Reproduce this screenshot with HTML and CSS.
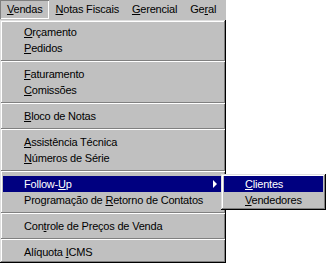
FILE: index.html
```html
<!DOCTYPE html>
<html lang="pt">
<head>
    <meta charset="UTF-8">
    <title>Vendas</title>
    <link rel="stylesheet" href="styles.css">
</head>
<body>
    <div class="menubar">
        <div class="menubar-item active"><u>V</u>endas</div>
        <div class="menubar-item"><u>N</u>otas Fiscais</div>
        <div class="menubar-item"><u>G</u>erencial</div>
        <div class="menubar-item">Ge<u>r</u>al</div>
    </div>

    <div class="dropdown">
        <div class="item"><u>O</u>rçamento</div>
        <div class="item"><u>P</u>edidos</div>
        <div class="separator"></div>
        <div class="item"><u>F</u>aturamento</div>
        <div class="item"><u>C</u>omissões</div>
        <div class="separator"></div>
        <div class="item"><u>B</u>loco de Notas</div>
        <div class="separator"></div>
        <div class="item"><u>A</u>ssistência Técnica</div>
        <div class="item"><u>N</u>úmeros de Série</div>
        <div class="separator"></div>
        <div class="item selected has-sub">
            Follow-<u>U</u>p
            <span class="arrow"></span>
            <div class="submenu">
                <div class="item selected"><u>C</u>lientes</div>
                <div class="item"><u>V</u>endedores</div>
            </div>
        </div>
        <div class="item">Programação de <u>R</u>etorno de Contatos</div>
        <div class="separator"></div>
        <div class="item">Con<u>t</u>role de Preços de Venda</div>
        <div class="separator"></div>
        <div class="item">Alíquota <u>I</u>CMS</div>
    </div>
</body>
</html>
```

FILE: styles.css
```css
body {
    margin: 0;
    background: #fff;
    font-family: "Liberation Sans", Arial, sans-serif;
    font-size: 11px;
    letter-spacing: -0.2px;
    color: #000;
}
u {
    text-decoration: underline;
    text-underline-offset: 1px;
}
.menubar {
    display: flex;
    width: 226px;
    height: 20px;
    background: #c0c0c0;
}
.menubar-item {
    flex-shrink: 0;
    white-space: nowrap;
    padding: 0 6px 0 7px;
    height: 19px;
    line-height: 19px;
}
.menubar-item.active {
    box-shadow: inset 1px 1px #808080, inset -1px -1px #fff;
}
.dropdown {
    position: relative;
    width: 220px;
    padding: 4px 3px 3px;
    background: #c0c0c0;
    box-shadow: inset -1px -1px #000, inset 1px 1px #dfdfdf, inset -2px -2px #808080, inset 2px 2px #fff;
}
.item {
    position: relative;
    height: 16px;
    line-height: 16px;
    padding-left: 21px;
    white-space: nowrap;
}
.item.selected {
    background: #000080;
    color: #fff;
}
.separator {
    height: 10px;
    display: flex;
    flex-direction: column;
    justify-content: center;
}
.separator::before {
    content: "";
    display: block;
    margin: 0 -2px;
    height: 1px;
    background: #808080;
    border-bottom: 1px solid #fff;
}
.arrow {
    position: absolute;
    right: 6px;
    top: 4px;
    width: 0;
    height: 0;
    border-top: 4px solid transparent;
    border-bottom: 4px solid transparent;
    border-left: 4px solid #fff;
}
.submenu {
    position: absolute;
    left: 218px;
    top: -2px;
    width: 99px;
    padding: 2px 3px;
    background: #c0c0c0;
    color: #000;
    box-shadow: inset -1px -1px #000, inset 1px 1px #dfdfdf, inset -2px -2px #808080, inset 2px 2px #fff;
}
```
